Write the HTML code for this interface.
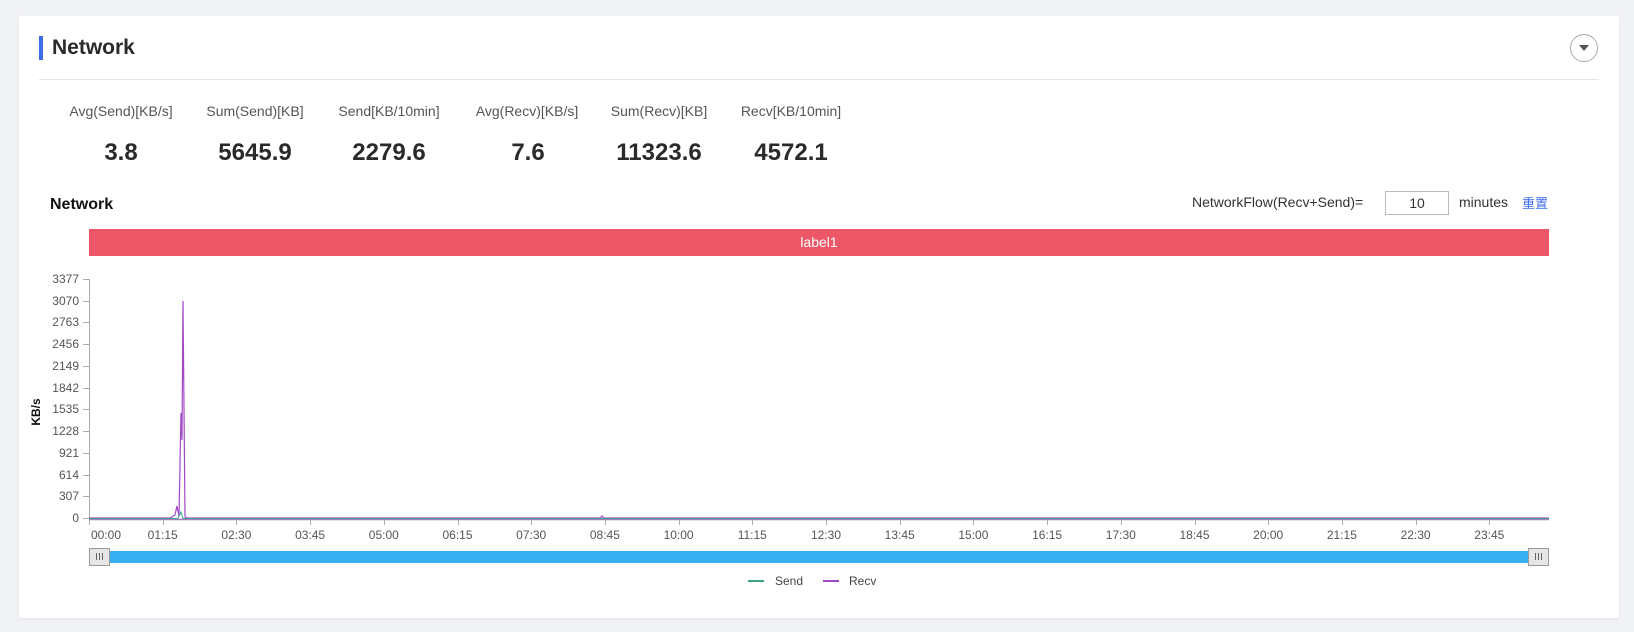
<!DOCTYPE html>
<html><head><meta charset="utf-8"><style>
body{margin:0;width:1634px;height:632px;background:#f1f2f6;font-family:"Liberation Sans","Noto Sans CJK SC",sans-serif;position:relative;overflow:hidden}
.card{position:absolute;left:19px;top:16px;width:1600px;height:602px;background:#fff;box-shadow:0 1px 3px rgba(0,0,0,.06)}
.a{position:absolute;white-space:nowrap}
.lab{font-size:14px;color:#555;top:103px;width:134px;text-align:center}
.val{font-size:24px;font-weight:bold;color:#2a2a2a;top:139px;width:134px;text-align:center}
</style></head><body>
<div class="card"></div>
<div class="a" style="left:39px;top:36px;width:4px;height:24px;background:#3d6ee8"></div>
<div class="a" style="left:52px;top:36px;font-size:21px;font-weight:bold;color:#2a2a2a">Network</div>
<div class="a" style="left:1570px;top:34px;width:26px;height:26px;border:1px solid #aaa;border-radius:50%"></div>
<div class="a" style="left:1579px;top:45px;width:0;height:0;border-left:5px solid transparent;border-right:5px solid transparent;border-top:6px solid #555"></div>
<div class="a" style="left:39px;top:79px;width:1560px;height:1px;background:#e4e4e4"></div>

<div class="a lab" style="left:54px">Avg(Send)[KB/s]</div>
<div class="a lab" style="left:188px">Sum(Send)[KB]</div>
<div class="a lab" style="left:322px">Send[KB/10min]</div>
<div class="a lab" style="left:460px">Avg(Recv)[KB/s]</div>
<div class="a lab" style="left:592px">Sum(Recv)[KB]</div>
<div class="a lab" style="left:724px">Recv[KB/10min]</div>
<div class="a val" style="left:54px">3.8</div>
<div class="a val" style="left:188px">5645.9</div>
<div class="a val" style="left:322px">2279.6</div>
<div class="a val" style="left:461px">7.6</div>
<div class="a val" style="left:592px">11323.6</div>
<div class="a val" style="left:724px">4572.1</div>

<div class="a" style="left:50px;top:196px;font-size:16px;font-weight:bold;color:#111">Network</div>
<div class="a" style="left:1192px;top:194px;font-size:14px;color:#333">NetworkFlow(Recv+Send)=</div>
<div class="a" style="left:1385px;top:191px;width:62px;height:22px;border:1px solid #bbb;font-size:14px;color:#333;text-align:center;line-height:22px">10</div>
<div class="a" style="left:1459px;top:194px;font-size:14px;color:#333">minutes</div>
<div class="a" style="left:1522px;top:193px;font-size:13px;color:#3c6cf0">重置</div>

<div class="a" style="left:89px;top:229px;width:1460px;height:27px;background:#eb5766;color:#fff;font-size:14px;text-align:center;line-height:27px">label1</div>

<svg class="a" style="left:0;top:0" width="1634" height="632" font-family="Liberation Sans, sans-serif">
<g font-size="12" fill="#555" text-anchor="end">
<text x="79" y="283">3377</text><text x="79" y="305">3070</text><text x="79" y="326">2763</text>
<text x="79" y="348">2456</text><text x="79" y="370">2149</text><text x="79" y="392">1842</text>
<text x="79" y="413">1535</text><text x="79" y="435">1228</text><text x="79" y="457">921</text>
<text x="79" y="479">614</text><text x="79" y="500">307</text><text x="79" y="522">0</text>
</g>
<g stroke="#aaa" stroke-width="1">
<path d="M89.5 279V519"/>
<path d="M83 279.5h6M83 301.5h6M83 322.5h6M83 344.5h6M83 366.5h6M83 388.5h6M83 409.5h6M83 431.5h6M83 453.5h6M83 475.5h6M83 496.5h6M83 518.5h6"/>
</g>
<text x="40" y="412" font-size="12" font-weight="bold" fill="#111" transform="rotate(-90 40 412)" text-anchor="middle">KB/s</text>
<path d="M89 519.5H1549" stroke="#a77bbd" stroke-width="1.5"/>
<g stroke="#aaa"><path id="tk" d="M89.5 520v5"/></g>
<g font-size="12" fill="#555" text-anchor="middle" id="xl"></g>
<path d="M89 518 L170 518 L175 515 L177 506 L179 516 L181 413 L182 440 L183 301 L185 517 L187 518 L600 518 L602 516 L604 518 L1549 518" fill="none" stroke="#a349c7" stroke-width="1.2"/>
<path d="M89 518.5 L178 518.5 L181 512 L183 518.5 L1549 518.5" fill="none" stroke="#3aa38a" stroke-width="1"/>
<rect x="89" y="551" width="1460" height="12" fill="#36aef0"/>
<rect x="89.5" y="548.5" width="20" height="17" fill="#e6e6e6" stroke="#999"/>
<rect x="1528.5" y="548.5" width="20" height="17" fill="#e6e6e6" stroke="#999"/>
<path d="M96.5 553v7M99.5 553v7M102.5 553v7M1535.5 553v7M1538.5 553v7M1541.5 553v7" stroke="#666"/>
<path d="M748 581h16" stroke="#3aa38a" stroke-width="2"/>
<text x="775" y="585" font-size="12" fill="#444">Send</text>
<path d="M823 581h16" stroke="#a349c7" stroke-width="2"/>
<text x="849" y="585" font-size="12" fill="#444">Recv</text>
</svg>
<script>
var t=["00:00","01:15","02:30","03:45","05:00","06:15","07:30","08:45","10:00","11:15","12:30","13:45","15:00","16:15","17:30","18:45","20:00","21:15","22:30","23:45"];
var g=document.getElementById('xl'),tk=document.querySelector('g[stroke="#aaa"]:not(:first-child)')||null,s='',d='';
for(var i=0;i<t.length;i++){var x=89+i*73.7;d+='M'+(Math.round(x)+.5)+' 520v5';
s+='<text x="'+(i==0?106:x)+'" y="539">'+t[i]+'</text>';}
g.innerHTML=s;document.getElementById('tk').setAttribute('d',d);
</script>
</body></html>
